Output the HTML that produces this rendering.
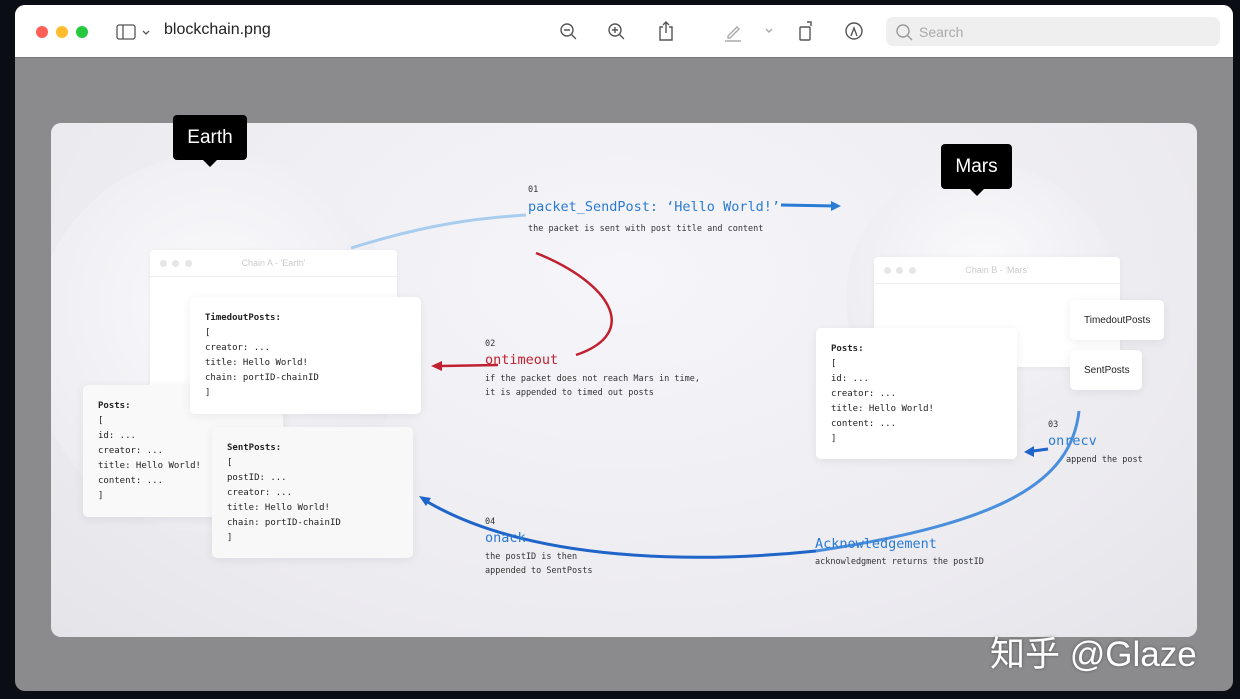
<!DOCTYPE html><html><head><meta charset="utf-8"><style>
*{margin:0;padding:0;box-sizing:border-box}
body{width:1240px;height:699px;background:#0b0d14;position:relative;overflow:hidden;font-family:"Liberation Sans",sans-serif}
.win{position:absolute;left:15px;top:5px;width:1218px;height:686px;border-radius:10px;background:#8b8b8d;overflow:hidden}
.bar{position:absolute;left:0;top:0;width:100%;height:53px;background:#fff;border-bottom:1px solid #777}
.dot{position:absolute;top:21px;width:12px;height:12px;border-radius:50%}
.card{position:absolute;left:36px;top:118px;width:1146px;height:514px;border-radius:10px;background:radial-gradient(ellipse at 50% 30%,#f6f6fa,#ecebf0 70%,#e4e4e9);overflow:hidden}
.mono{font-family:"DejaVu Sans Mono","Liberation Mono",monospace}
.box{position:absolute;background:#fff;border-radius:5px;box-shadow:0 2px 10px rgba(0,0,0,.07);font-size:9px;line-height:15px;color:#222;padding:14px 15px;white-space:nowrap}
.box b{font-weight:bold}
.chw{position:absolute;background:#fff;border-radius:4px;box-shadow:0 1px 6px rgba(0,0,0,.05)}
.chw .t{height:27px;border-bottom:1px solid #eee;font-size:9px;color:#ccc;text-align:center;line-height:27px}
.chw .d{position:absolute;top:10px;width:7px;height:7px;border-radius:50%;background:#e6e6e6}
.tip{position:absolute;background:#000;color:#fff;font-size:19px;text-align:center;border-radius:4px;z-index:5}
.tip:after{content:"";position:absolute;left:50%;bottom:-7px;margin-left:-7px;border:7px solid transparent;border-bottom:0;border-top-color:#000}
.lbl{position:absolute;font-size:8.5px;color:#333;line-height:14px;white-space:nowrap}
.blue{color:#2a7bd4}
</style></head><body>
<div class="win">
<div class="bar">
<div class="dot" style="left:21px;background:#fe5f57"></div>
<div class="dot" style="left:41px;background:#febc2e"></div>
<div class="dot" style="left:61px;background:#28c840"></div>
<svg style="position:absolute;left:100px;top:18px" width="40" height="18" fill="none" stroke="#555" stroke-width="1.3"><rect x="2" y="2" width="18" height="14" rx="2"/><line x1="8" y1="2" x2="8" y2="16"/><path d="M28 8l3 3 3-3"/></svg>
<div style="position:absolute;left:149px;top:16px;font-size:16px;color:#222">blockchain.png</div>
<svg style="position:absolute;left:540px;top:14px" width="320" height="26" fill="none" stroke="#555" stroke-width="1.4">
<circle cx="12" cy="11" r="6"/><path d="M16 15l5 5M9 11h6"/>
<circle cx="60" cy="11" r="6"/><path d="M64 15l5 5M57 11h6M60 8v6"/>
<path d="M108 8h-3v13h12v-13h-3M111 3v11M108 6l3-3 3 3"/>
<path d="M173 17l9-9 2 2-9 9h-2zM170 22h16" stroke="#aaa"/>
<path d="M211 10l3 3 3-3" stroke="#aaa"/>
<rect x="245" y="8" width="10" height="13" rx="1"/><path d="M252 3h4v4"/>
<circle cx="299" cy="12" r="8"/><path d="M296 17l3-8 3 8"/>
</svg>
<div style="position:absolute;left:871px;top:12px;width:334px;height:29px;background:#efeff0;border-radius:7px"></div>
<svg style="position:absolute;left:880px;top:18px" width="20" height="20" fill="none" stroke="#999" stroke-width="1.4"><circle cx="8" cy="8" r="6"/><path d="M12 12l5 5"/></svg>
<div style="position:absolute;left:904px;top:19px;font-size:14px;color:#aaa">Search</div>
</div>
<div class="card">
<div style="position:absolute;left:-20px;top:30px;width:370px;height:380px;border-radius:50%;background:radial-gradient(circle at 50% 40%,#fafafc,#ececf1 75%,rgba(236,236,241,0) 100%)"></div>
<div style="position:absolute;left:795px;top:40px;width:270px;height:270px;border-radius:50%;background:radial-gradient(circle at 50% 40%,#fafafc,#ececf1 75%,rgba(236,236,241,0) 100%)"></div>
<svg style="position:absolute;left:0;top:0" width="1146" height="514" fill="none">
<path d="M300 125 C380 100 430 95 475 92" stroke="#a9cdef" stroke-width="3"/>
<path d="M730 82 L785 83" stroke="#2a7bd4" stroke-width="3"/><path d="M790 83l-10-5v10z" fill="#2a7bd4"/>
<path d="M485 130 C560 160 590 210 525 232" stroke="#c02030" stroke-width="2.5"/>
<path d="M447 242 L390 243" stroke="#c02030" stroke-width="2.5"/><path d="M380 243l11-5v10z" fill="#c02030"/>
<path d="M1028 288 C1020 360 950 400 765 428" stroke="#4a8fdc" stroke-width="3"/>
<path d="M765 428 C650 440 480 440 375 378" stroke="#1f64c8" stroke-width="3"/><path d="M368 373l12 2-5 8z" fill="#1f64c8"/>
<path d="M997 326 L982 328" stroke="#1f64c8" stroke-width="3"/><path d="M973 329l10-6v11z" fill="#1f64c8"/>
</svg>
<div class="chw" style="left:99px;top:127px;width:247px;height:140px"><div class="t">Chain A - 'Earth'</div><div class="d" style="left:10px"></div><div class="d" style="left:22px"></div><div class="d" style="left:35px"></div></div>
<div class="chw" style="left:823px;top:134px;width:246px;height:110px"><div class="t">Chain B - 'Mars'</div><div class="d" style="left:10px"></div><div class="d" style="left:22px"></div><div class="d" style="left:35px"></div></div>
<div class="box mono" style="left:32px;top:262px;width:200px;height:132px;background:#f9f9fa"><b>Posts:</b><br>[<br>id: ...<br>creator: ...<br>title: Hello World!<br>content: ...<br>]</div>
<div class="box mono" style="left:139px;top:174px;width:231px;height:117px"><b>TimedoutPosts:</b><br>[<br>creator: ...<br>title: Hello World!<br>chain: portID-chainID<br>]</div>
<div class="box mono" style="left:161px;top:304px;width:201px;height:131px;background:#f8f8f9"><b>SentPosts:</b><br>[<br>postID: ...<br>creator: ...<br>title: Hello World!<br>chain: portID-chainID<br>]</div>
<div class="box mono" style="left:765px;top:205px;width:201px;height:131px"><b>Posts:</b><br>[<br>id: ...<br>creator: ...<br>title: Hello World!<br>content: ...<br>]</div>
<div class="box" style="left:1019px;top:177px;width:94px;height:40px;font-size:10px;padding:13px 14px">TimedoutPosts</div>
<div class="box" style="left:1019px;top:227px;width:72px;height:40px;font-size:10px;padding:13px 14px">SentPosts</div>
<div class="lbl mono" style="left:477px;top:60px">01</div>
<div class="mono blue" style="position:absolute;left:477px;top:76px;font-size:13.5px">packet_SendPost: ‘Hello World!’</div>
<div class="lbl mono" style="left:477px;top:99px">the packet is sent with post title and content</div>
<div class="lbl mono" style="left:434px;top:214px">02</div>
<div class="mono" style="position:absolute;left:434px;top:229px;font-size:13.5px;color:#c02030">ontimeout</div>
<div class="lbl mono" style="left:434px;top:249px">if the packet does not reach Mars in time,<br>it is appended to timed out posts</div>
<div class="lbl mono" style="left:997px;top:295px">03</div>
<div class="mono blue" style="position:absolute;left:997px;top:310px;font-size:13.5px">onrecv</div>
<div class="lbl mono" style="left:1015px;top:330px">append the post</div>
<div class="lbl mono" style="left:434px;top:392px">04</div>
<div class="mono blue" style="position:absolute;left:434px;top:407px;font-size:13.5px">onack</div>
<div class="lbl mono" style="left:434px;top:427px">the postID is then<br>appended to SentPosts</div>
<div class="mono blue" style="position:absolute;left:764px;top:413px;font-size:13.5px">Acknowledgement</div>
<div class="lbl mono" style="left:764px;top:432px">acknowledgment returns the postID</div>
</div>
<div class="tip" style="left:158px;top:110px;width:74px;height:45px;line-height:45px">Earth</div>
<div class="tip" style="left:926px;top:139px;width:71px;height:45px;line-height:45px">Mars</div>
</div>
<div style="position:absolute;left:990px;top:626px;font-size:35px;color:#fff;font-family:'Liberation Sans','Noto Sans CJK SC',sans-serif;text-shadow:0 0 3px rgba(0,0,0,.4)">知乎 @Glaze</div>
</body></html>
